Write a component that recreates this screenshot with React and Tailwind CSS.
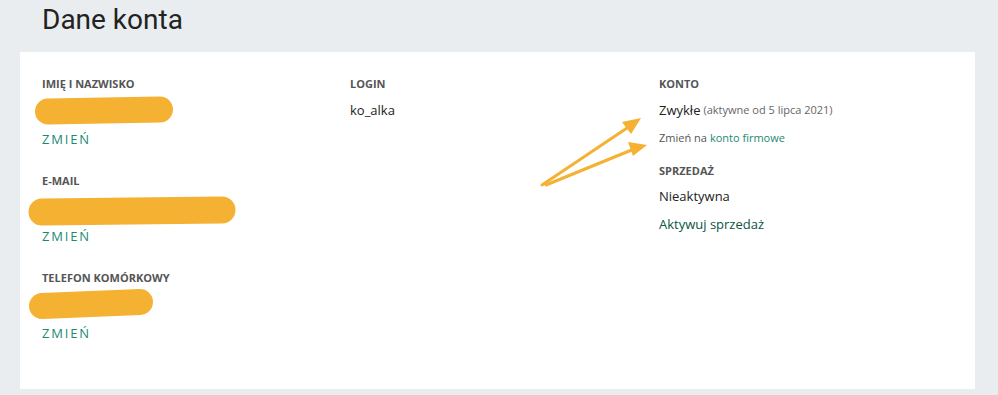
import React from "react";

const label = "text-[11px] leading-[16px] font-bold uppercase text-[#555]";
const change = "text-[13px] leading-[20px] tracking-[0.14em] text-[#1b8a73]";

const Section = ({ title, last }) => (
  <div className={last ? "" : "mb-[24px]"}>
    <div className={label}>{title}</div>
    <div className="h-[37px]" />
    <div className={change}>ZMIEŃ</div>
  </div>
);

// redaction blobs and arrows are drawn on top of the page
const Marks = () => (
  <svg
    className="absolute inset-0 pointer-events-none"
    width="998"
    height="395"
    viewBox="0 0 998 395"
  >
    <g stroke="#f5b132" strokeLinecap="round" fill="none">
      <line x1="48" y1="111.5" x2="160" y2="109.5" strokeWidth="26" />
      <line x1="42" y1="212" x2="222" y2="210" strokeWidth="27" />
      <line x1="42" y1="306" x2="140" y2="302" strokeWidth="26" />
      <line x1="542" y1="185" x2="630" y2="126" strokeWidth="3" />
      <line x1="546" y1="185" x2="634" y2="149" strokeWidth="3" />
    </g>
    <polygon points="641,118 622,122 631,134" fill="#f5b132" />
    <polygon points="647,145 628,142 633,156" fill="#f5b132" />
  </svg>
);

export default function App() {
  return (
    <div className="relative w-[998px] h-[395px] bg-[#e9edf0] font-['Open_Sans',sans-serif] overflow-hidden">
      <div className="h-[52px] pl-[42px] pt-[6px]">
        <h1 className="text-[28px] leading-[28px] text-[#222] font-['Roboto',sans-serif]">
          Dane konta
        </h1>
      </div>
      <div className="ml-[20px] w-[955px] h-[337px] bg-white pt-[24px] pl-[22px] grid grid-cols-[308px_309px_1fr]">
        <div>
          <Section title="Imię i nazwisko" />
          <Section title="E-mail" />
          <Section title="Telefon komórkowy" last />
        </div>
        <div>
          <div className={label}>Login</div>
          <div className="h-[37px] flex items-center text-[13px] text-[#222]">
            ko_alka
          </div>
        </div>
        <div>
          <div className={label}>Konto</div>
          <div className="h-[37px] flex items-center text-[13px] text-[#222]">
            Zwykłe
            <span className="ml-[3px] text-[11px] text-[#666]">
              (aktywne od 5 lipca 2021)
            </span>
          </div>
          <div className="h-[18px] flex items-center text-[11px] text-[#555]">
            Zmień na
            <span className="ml-[3px] text-[#1b8a73]">konto firmowe</span>
          </div>
          <div className={label + " mt-[16px]"}>Sprzedaż</div>
          <div className="h-[36px] flex items-center text-[13px] text-[#222]">
            Nieaktywna
          </div>
          <div className="h-[20px] flex items-center text-[13px] text-[#0c5445]">
            Aktywuj sprzedaż
          </div>
        </div>
      </div>
      <Marks />
    </div>
  );
}
